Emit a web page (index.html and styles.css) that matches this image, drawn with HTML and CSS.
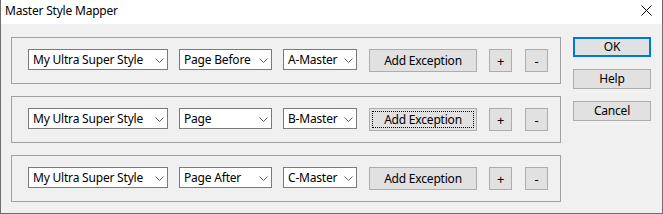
FILE: index.html
```html
<!DOCTYPE html>
<html>
<head>
<meta charset="utf-8">
<link rel="stylesheet" href="styles.css">
</head>
<body>
<div class="window">
  <div class="titlebar">
    <span class="title">Master Style Mapper</span>
    <svg class="close" width="11" height="11" viewBox="0 0 11 11"><path d="M0.5 0.5 L10.5 10.5 M10.5 0.5 L0.5 10.5" stroke="#000" stroke-width="1" fill="none"/></svg>
  </div>
  <div class="content">
    <div class="groups">
      <div class="group">
        <div class="select s-style"><span>My Ultra Super Style</span><svg class="chev" width="9" height="5" viewBox="0 0 9 5"><polyline points="0.5,0.5 4.5,4.5 8.5,0.5" fill="none" stroke="#606060"/></svg></div>
        <div class="select s-page"><span>Page Before</span><svg class="chev" width="9" height="5" viewBox="0 0 9 5"><polyline points="0.5,0.5 4.5,4.5 8.5,0.5" fill="none" stroke="#606060"/></svg></div>
        <div class="select s-master"><span>A-Master</span><svg class="chev" width="9" height="5" viewBox="0 0 9 5"><polyline points="0.5,0.5 4.5,4.5 8.5,0.5" fill="none" stroke="#606060"/></svg></div>
        <button class="btn exc">Add Exception</button>
        <button class="btn small">+</button>
        <button class="btn small minus">-</button>
      </div>
      <div class="group">
        <div class="select s-style"><span>My Ultra Super Style</span><svg class="chev" width="9" height="5" viewBox="0 0 9 5"><polyline points="0.5,0.5 4.5,4.5 8.5,0.5" fill="none" stroke="#606060"/></svg></div>
        <div class="select s-page"><span>Page</span><svg class="chev" width="9" height="5" viewBox="0 0 9 5"><polyline points="0.5,0.5 4.5,4.5 8.5,0.5" fill="none" stroke="#606060"/></svg></div>
        <div class="select s-master"><span>B-Master</span><svg class="chev" width="9" height="5" viewBox="0 0 9 5"><polyline points="0.5,0.5 4.5,4.5 8.5,0.5" fill="none" stroke="#606060"/></svg></div>
        <button class="btn exc focused"><span class="focus-ring">Add Exception</span></button>
        <button class="btn small">+</button>
        <button class="btn small minus">-</button>
      </div>
      <div class="group">
        <div class="select s-style"><span>My Ultra Super Style</span><svg class="chev" width="9" height="5" viewBox="0 0 9 5"><polyline points="0.5,0.5 4.5,4.5 8.5,0.5" fill="none" stroke="#606060"/></svg></div>
        <div class="select s-page"><span>Page After</span><svg class="chev" width="9" height="5" viewBox="0 0 9 5"><polyline points="0.5,0.5 4.5,4.5 8.5,0.5" fill="none" stroke="#606060"/></svg></div>
        <div class="select s-master"><span>C-Master</span><svg class="chev" width="9" height="5" viewBox="0 0 9 5"><polyline points="0.5,0.5 4.5,4.5 8.5,0.5" fill="none" stroke="#606060"/></svg></div>
        <button class="btn exc">Add Exception</button>
        <button class="btn small">+</button>
        <button class="btn small minus">-</button>
      </div>
    </div>
    <div class="actions">
      <button class="btn action default">OK</button>
      <button class="btn action">Help</button>
      <button class="btn action">Cancel</button>
    </div>
  </div>
</div>
</body>
</html>
```
FILE: styles.css
```css
* { box-sizing: border-box; }
html, body {
  margin: 0;
  padding: 0;
  width: 663px;
  height: 214px;
  overflow: hidden;
  background: #f0f0f0;
  font-family: "Noto Sans", "Liberation Sans", sans-serif;
  font-size: 12px;
  letter-spacing: -0.2px;
  color: #000;
}
.window {
  width: 663px;
  height: 214px;
  border: 1px solid #6e6e6e;
  border-top: none;
  background: #f0f0f0;
  display: flex;
  flex-direction: column;
}
.titlebar {
  height: 24px;
  background: #fff;
  display: flex;
  align-items: center;
  justify-content: space-between;
  padding: 0 10px 0 4px;
}
.title {
  font-size: 12px;
  line-height: 16px;
  margin-top: -2px;
}
.close { display: block; margin-top: -3px; }
.content {
  display: flex;
  align-items: flex-start;
  padding: 13px 11px 0 10px;
}
.groups {
  display: flex;
  flex-direction: column;
  gap: 12px;
  width: 550px;
}
.group {
  height: 47px;
  border: 1px solid #a0a0a0;
  padding: 11px 0 0 16px;
  display: flex;
  align-items: flex-start;
}
.select {
  height: 21px;
  border: 1px solid #7a7a7a;
  background: #fff;
  display: flex;
  align-items: center;
  justify-content: space-between;
  padding: 0 3px 0 4px;
  margin-right: 11px;
  white-space: nowrap;
}
.select span { line-height: 16px; }
.chev { display: block; margin-top: 1px; }
.s-style { width: 140px; }
.s-page { width: 93px; }
.s-master { width: 74px; margin-right: 12px; }
.btn {
  font-family: inherit;
  font-size: 12px;
  letter-spacing: inherit;
  color: #000;
  background: #e1e1e1;
  border: 1px solid #adadad;
  padding: 0;
  margin: 0;
  height: 23px;
  display: flex;
  align-items: center;
  justify-content: center;
  line-height: 16px;
}
.exc { width: 108px; margin-right: 12px; }
.small { width: 23px; margin-right: 13px; font-size: 13px; }
.small.minus { margin-right: 0; }
.focused { padding: 2px; }
.focus-ring {
  flex: 1;
  align-self: stretch;
  border: 1px dotted #000;
  display: flex;
  align-items: center;
  justify-content: center;
}
.actions {
  margin-left: 12px;
  display: flex;
  flex-direction: column;
  gap: 12px;
}
.action { width: 78px; height: 20px; }
.default { border: 2px solid #0078d7; }
```
